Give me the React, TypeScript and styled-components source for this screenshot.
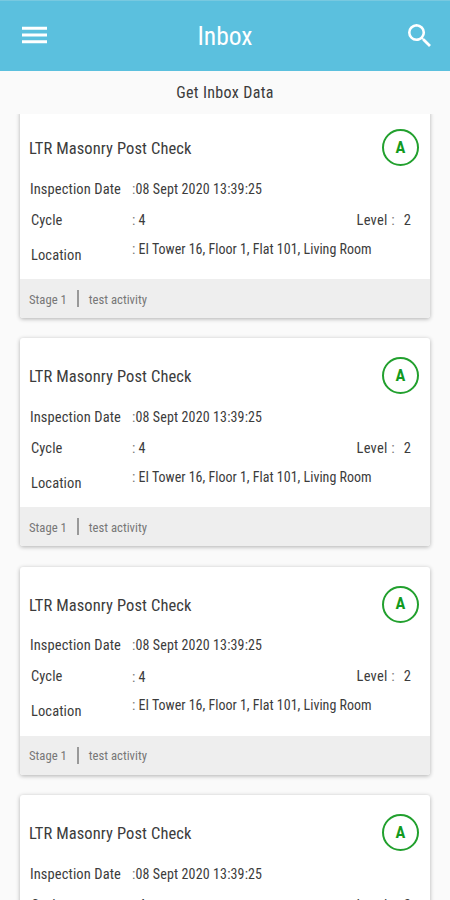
import React from "react";
import styled, { createGlobalStyle } from "styled-components";

const GlobalStyle = createGlobalStyle`
  * { box-sizing: border-box; }
  body {
    margin: 0;
    background: #fafafa;
    color: #3c3c3c;
    font-family: "Roboto Condensed", Roboto, "Liberation Sans", sans-serif;
    font-stretch: 75%;
  }
`;

const Screen = styled.div`
  width: 450px;
  height: 900px;
  display: flex;
  flex-direction: column;
  overflow: hidden;
`;

const AppBar = styled.header`
  flex: none;
  height: 71px;
  padding: 0 19px 0 22px;
  display: flex;
  align-items: center;
  justify-content: space-between;
  background: #5bc0de;
  color: #fff;
  border-top: 1px solid #78c9e0;
`;

const AppTitle = styled.h1`
  margin: 0 5px 0 0;
  font-size: 25.5px;
  font-weight: 400;
  line-height: 30px;
`;

const Glyph = styled.svg`
  flex: none;
  display: block;
  margin-bottom: 2px;
`;

const Text = styled.span<{ $size: number; $spacing?: number }>`
  display: block;
  white-space: pre;
  font-size: ${(p) => p.$size}px;
  line-height: 20px;
  letter-spacing: ${(p) => p.$spacing ?? 0}px;
`;

const Colon = styled.span`
  color: #777;
`;

const Caption = styled.div`
  flex: none;
  height: 43px;
  display: flex;
  align-items: center;
  justify-content: center;
`;

const List = styled.main`
  flex: 1;
  min-height: 0;
  overflow: hidden;
  padding: 0 20px;
`;

const Card = styled.article`
  height: 208px;
  margin-bottom: 20.4px;
  border-radius: 3px;
  background: #fff;
  box-shadow: 0 1px 4px rgba(0, 0, 0, 0.3);
  display: flex;
  flex-direction: column;
  overflow: hidden;

  &:first-child { margin-top: -4px; }
`;

const CardHead = styled.div`
  height: 64px;
  padding: 20px 11px 0 9px;
  display: flex;
  justify-content: space-between;
  align-items: flex-start;
`;

const Title = styled.h2`
  margin: 9px 0 0;
  font-size: 16.5px;
  font-weight: 400;
  line-height: 20px;
  letter-spacing: 0.1px;
`;

const Grade = styled.div`
  width: 37px;
  height: 37px;
  margin-top: -1px;
  border: 2px solid #22a02e;
  border-radius: 50%;
  display: flex;
  align-items: center;
  justify-content: center;
  color: #129a20;
  font-size: 16.5px;
  font-weight: 700;
  line-height: 20px;
`;

const Field = styled.div<{ $height: number; $inset?: number }>`
  height: ${(p) => p.$height}px;
  padding: 0 19px 0 ${(p) => p.$inset ?? 11}px;
  display: grid;
  grid-template-columns: ${(p) => 112 - (p.$inset ?? 11)}px 1fr auto;
  align-items: center;
`;

const Value = styled.div<{ $raise?: number }>`
  padding-bottom: ${(p) => p.$raise ?? 1}px;
`;

const Level = styled.div`
  display: flex;
  gap: 9px;
`;

const Footer = styled.footer`
  margin-top: auto;
  height: 39px;
  padding: 2px 9px 0;
  display: flex;
  align-items: center;
  background: #eee;
  color: #777;
`;

const Rule = styled.span`
  width: 2px;
  height: 17px;
  margin: -2px 10px 0 10px;
  background: #999;
`;

const items = [0, 1, 2, 3];

export default function App() {
  return (
    <Screen>
      <GlobalStyle />
      <AppBar>
        <Glyph width="25" height="18" viewBox="0 0 25 18" fill="#fff">
          <path d="M0 .8h25v3H0zM0 7.5h25v3H0zM0 14.3h25v3H0z" />
        </Glyph>
        <AppTitle>Inbox</AppTitle>
        <Glyph width="23" height="23" viewBox="3 3 17.5 17.5" fill="#fff">
          <path d="M15.5 14h-.79l-.28-.27A6.47 6.47 0 0 0 16 9.5 6.5 6.5 0 1 0 9.5 16c1.61 0 3.09-.59 4.23-1.57l.27.28v.79l5 4.99L20.49 19l-4.99-5zm-6 0C7.01 14 5 11.99 5 9.5S7.01 5 9.5 5 14 7.01 14 9.5 11.99 14 9.5 14z" />
        </Glyph>
      </AppBar>
      <Caption>
        <Text $size={16} $spacing={0.35}>Get Inbox Data</Text>
      </Caption>
      <List>
        {items.map((id) => (
          <Card key={id}>
            <CardHead>
              <Title>LTR Masonry Post Check</Title>
              <Grade>A</Grade>
            </CardHead>
            <Field $height={31} $inset={10}>
              <Text $size={14.5} $spacing={0.1}>Inspection Date</Text>
              <Value $raise={2}>
                <Text $size={14} $spacing={0.13}><Colon>:</Colon>08 Sept 2020 13:39:25</Text>
              </Value>
            </Field>
            <Field $height={31}>
              <Text $size={14.5} $spacing={0.1}>Cycle</Text>
              <Value><Text $size={14}><Colon>:</Colon> 4</Text></Value>
              <Level>
                <Text $size={14.5} $spacing={0.25}>Level <Colon>:</Colon></Text>
                <Text $size={14.5}>2</Text>
              </Level>
            </Field>
            <Field $height={39}>
              <Text $size={14.5} $spacing={0.1}>Location</Text>
              <Value $raise={14}>
                <Text $size={14}><Colon>:</Colon> EI Tower 16, Floor 1, Flat 101, Living Room</Text>
              </Value>
            </Field>
            <Footer>
              <Text $size={12.7}>Stage 1</Text>
              <Rule />
              <Text $size={12.7}>test activity</Text>
            </Footer>
          </Card>
        ))}
      </List>
    </Screen>
  );
}
